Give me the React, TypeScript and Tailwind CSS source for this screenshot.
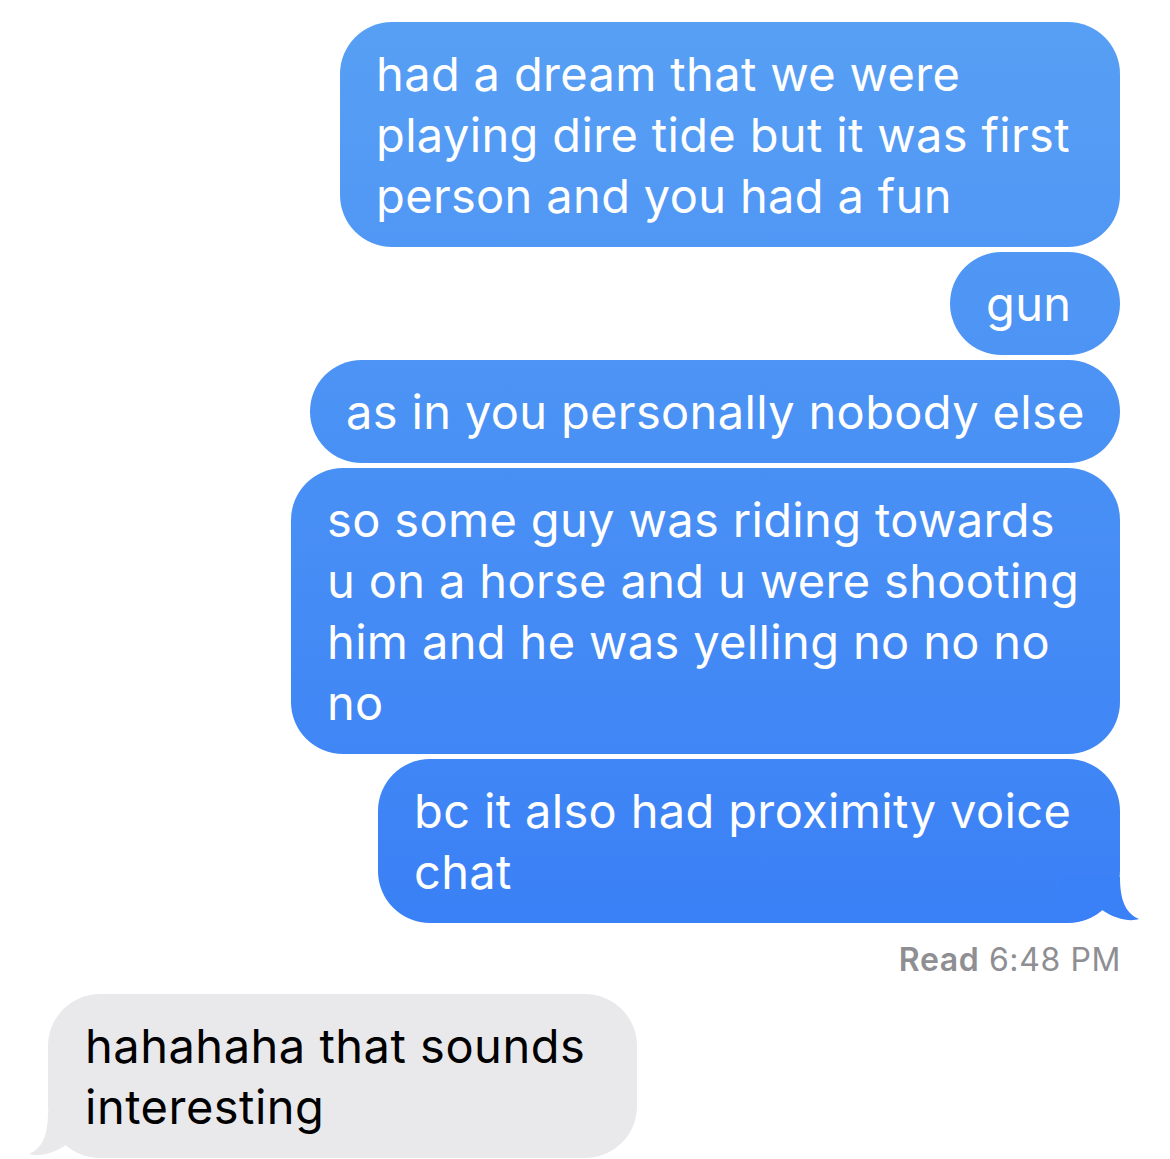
import React from 'react';

type Msg = {
  id: number;
  lines: string[];
  width: string;
  tail?: boolean;
};

const sent: Msg[] = [
  { id: 1, lines: ['had a dream that we were', 'playing dire tide but it was first', 'person and you had a fun'], width: 'w-[780px]' },
  { id: 2, lines: ['gun'], width: 'w-[170px]' },
  { id: 3, lines: ['as in you personally nobody else'], width: 'w-[810px]' },
  { id: 4, lines: ['so some guy was riding towards', 'u on a horse and u were shooting', 'him and he was yelling no no no', 'no'], width: 'w-[829px]' },
  { id: 5, lines: ['bc it also had proximity voice', 'chat'], width: 'w-[742px]', tail: true },
];

function Tail({ color, flip }: { color: string; flip?: boolean }) {
  return (
    <svg
      width="80"
      height="46"
      viewBox="0 0 80 46"
      className={flip ? 'absolute bottom-0 -left-[20px] -scale-x-100' : 'absolute bottom-0 -right-[20px]'}
    >
      <path d="M0,0 H60 C60,22 65,36 79,42 C70,45 55,42 42,33 C35,40 22,46 0,46 Z" fill={color} />
    </svg>
  );
}

export default function App() {
  return (
    <div
      className="w-[1170px] h-[1159px] bg-white overflow-hidden pt-[22px] flex flex-col"
      style={{ fontFamily: 'Inter, "Noto Sans", sans-serif' }}
    >
      <div className="flex flex-col items-end gap-[5px] pr-[50px]">
        {sent.map(m => (
          <div
            key={m.id}
            className={`relative ${m.width} rounded-[52px] py-[21px] pl-[36px] text-white text-[47px] leading-[61px] tracking-[0.35px] bg-[linear-gradient(180deg,#58a0f4_0px,#3a80f6_930px)] bg-fixed`}
          >
            {m.tail && <Tail color="#3a80f6" />}
            <div className="relative">
              {m.lines.map((l, i) => (
                <div key={i} className="whitespace-nowrap">{l}</div>
              ))}
            </div>
          </div>
        ))}
      </div>

      <div className="mt-[17px] pr-[49px] text-right text-[32px] leading-[40px] tracking-[0.6px] text-[#8e8e93]">
        <span className="font-semibold">Read</span> 6:48 PM
      </div>

      <div className="mt-[14px] pl-[48px]">
        <div className="relative w-[589px] rounded-[52px] py-[21px] pl-[37px] bg-[#e9e9eb] text-black text-[47px] leading-[61px] tracking-[0.5px]">
          <Tail color="#e9e9eb" flip />
          <div className="relative">
            <div className="whitespace-nowrap">hahahaha that sounds</div>
            <div className="whitespace-nowrap">interesting</div>
          </div>
        </div>
      </div>
    </div>
  );
}
